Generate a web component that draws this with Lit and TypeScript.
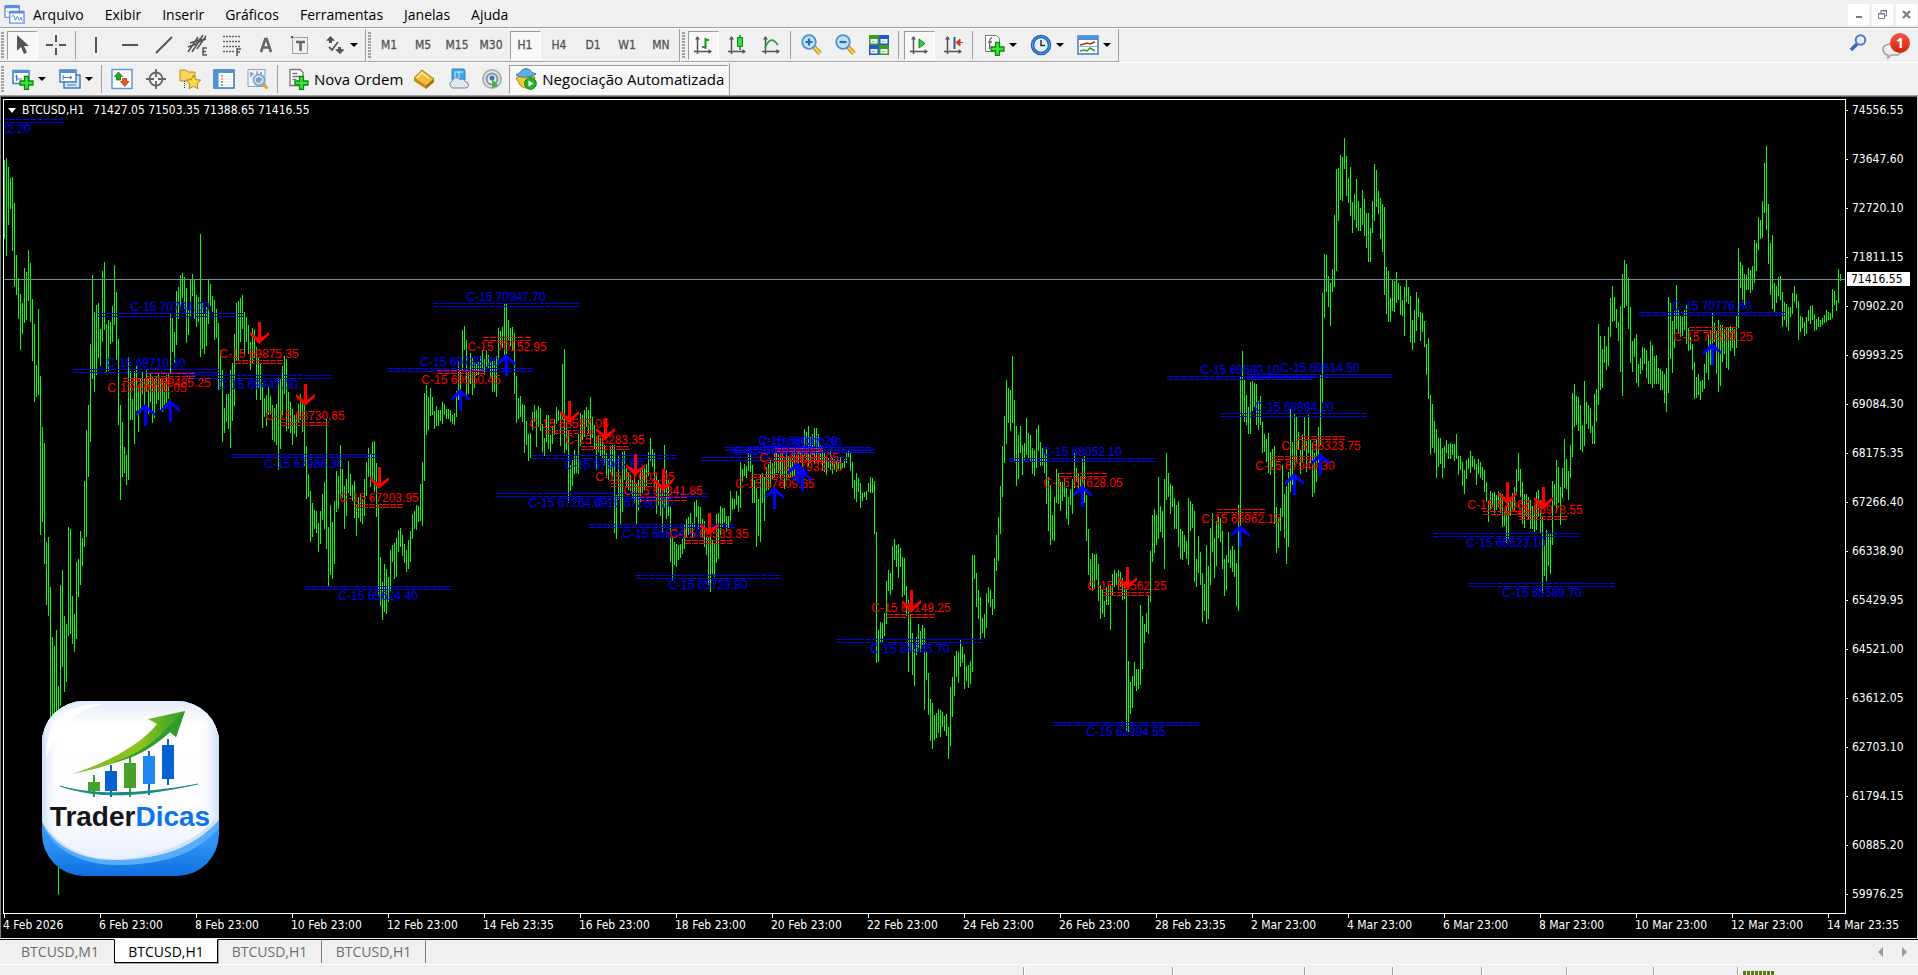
import { LitElement, html, svg, css, nothing } from "lit";
import type { SVGTemplateResult } from "lit";
import { customElement, property, state } from "lit/decorators.js";
import { classMap } from "lit/directives/class-map.js";

const UI_FONT = css`"Open Sans", "Noto Sans", sans-serif`;
const CHART_FONT = css`"DejaVu Sans Condensed", "DejaVu Sans", sans-serif`;

/* High/low of every bar in chart units, oldest first, two units apart. */
const FIRST_BAR_X = 4;
const BAR_STEP = 2;
const BARS = `
160,239 158,256 167,225 178,209 177,251 203,287 255,295 278,319 294,350 303,334 268,323 272,320 250,301 263,322 299,361 324,402
365,397 309,395 376,535 427,522 443,564 542,605 537,616 587,725 637,720 646,740 630,715 686,895 585,706 570,667 616,692 624,682
527,636 529,634 596,644 614,652 562,639 559,597 531,585 538,566 481,547 430,537 405,477 344,442 275,379 312,392 305,375 303,358
329,366 271,342 262,330 324,372 320,371 322,344 306,342 265,325 292,360 339,425 405,500 422,477 447,473 455,485 357,480 371,420
399,420 371,444 366,411 387,432 379,413 372,394 379,406 370,392 379,414 372,402 377,423 379,418 376,404 374,400 379,410 380,412
383,405 375,403 373,399 314,374 318,352 332,363 291,345 287,319 275,306 273,298 277,309 288,343 310,335 280,316 274,296 280,319
295,327 297,322 234,357 303,349 314,354 307,346 279,324 284,306 296,312 300,340 309,338 323,390 350,389 370,442 408,433 394,422
394,429 370,448 363,421 334,406 303,360 301,361 298,342 295,329 312,354 317,342 325,354 342,370 328,363 330,358 347,400 358,389
363,400 383,428 398,417 395,426 387,415 396,414 405,440 408,442 404,445 379,470 379,449 366,415 356,394 359,431 392,429 402,433
409,445 415,434 414,437 404,423 394,420 400,432 401,466 446,499 474,497 491,542 503,537 510,529 511,533 523,552 511,544 494,520
482,529 419,549 527,586 505,575 522,579 501,564 471,512 476,509 445,497 469,498 486,529 479,516 461,493 474,496 485,501 481,518
504,536 497,518 493,522 499,524 479,516 462,496 448,477 454,487 442,481 441,492 463,517 504,596 557,606 582,620 564,612 569,614
577,602 550,591 545,562 543,579 538,577 530,552 528,547 535,556 544,563 550,572 540,569 531,562 514,539 511,529 505,530 506,522
484,521 462,526 393,481 385,435 397,430 388,416 397,415 411,429 406,426 410,426 410,421 402,424 404,415 409,419 409,419 410,422
415,424 413,425 391,417 361,400 370,390 330,372 326,350 340,398 370,394 353,384 358,395 362,388 364,375 361,375 356,370 351,370
359,375 351,367 355,369 362,378 361,392 360,392 356,397 328,365 331,345 327,348 304,355 304,354 320,341 328,346 327,350 333,394
376,423 398,419 396,417 404,422 405,453 421,445 434,461 433,458 412,430 405,422 410,447 406,427 408,431 424,452 438,456 415,442
415,449 435,452 426,444 420,435 407,424 410,421 413,446 364,420 349,453 421,450 430,503 465,491 460,486 450,474 455,473 434,474
413,446 415,440 410,437 407,427 410,434 397,444 417,438 425,449 436,470 435,452 438,456 438,458 445,465 453,476 459,480 447,472
445,476 445,533 495,539 456,500 479,524 452,512 451,480 468,487 472,490 475,491 480,498 460,503 483,524 480,510 470,502 467,493
468,490 464,487 452,476 438,461 449,467 453,487 473,514 480,505 487,516 490,533 445,508 470,519 480,516 507,562 538,580 542,565
544,567 545,560 544,558 539,554 524,549 519,537 517,535 513,533 523,537 502,527 500,517 506,530 507,527 519,537 521,547 537,555
537,585 535,592 540,574 543,577 514,563 513,559 506,535 508,527 508,523 516,532 516,528 491,521 498,510 499,509 491,505 496,512
462,508 469,482 464,476 466,478 453,471 455,472 465,503 480,503 488,547 499,536 474,542 473,503 477,521 467,491 464,490 460,487
463,480 453,477 447,473 450,473 455,480 452,476 460,489 453,480 456,477 458,478 455,477 449,476 455,470 451,468 450,462 448,468
429,456 432,460 426,466 437,462 434,455 428,464 428,460 434,463 445,462 450,470 452,472 458,475 457,468 451,470 458,474 459,470
460,472 462,469 457,470 463,468 459,468 453,463 451,457 452,471 462,488 480,499 473,502 478,492 483,508 493,501 492,497 491,500
483,492 477,493 478,493 481,534 532,663 630,662 622,642 623,642 613,636 581,624 570,591 573,595 546,590 539,560 545,567 544,578
548,567 557,597 558,595 586,616 600,672 615,650 633,675 649,686 637,655 624,651 631,652 625,645 628,710 652,680 673,715 699,741
703,749 715,740 713,738 709,733 710,737 712,727 716,731 714,736 727,759 687,746 677,717 656,696 651,677 652,683 639,667 647,663
654,689 666,681 665,688 661,684 555,672 555,579 573,607 590,619 597,639 618,633 614,638 593,628 587,603 590,607 599,615 558,609
535,571 517,561 486,534 446,497 416,463 380,444 388,423 390,431 356,423 400,461 426,486 435,479 426,453 445,475 443,460 418,455
433,458 435,461 448,474 450,476 429,468 425,451 442,466 448,465 453,473 449,504 477,531 486,545 515,540 497,541 469,503 473,504
482,511 482,501 478,497 488,519 497,525 489,505 479,514 453,488 468,482 473,492 477,490 459,483 456,503 495,541 529,575 559,586
553,591 554,589 554,580 564,601 585,619 590,614 601,617 587,605 585,605 586,630 574,596 570,587 573,585 570,590 572,587 578,600
587,599 590,731 661,732 682,714 676,708 662,686 669,691 669,689 605,685 616,669 624,643 613,632 596,634 551,602 515,562 509,553
515,545 477,539 506,532 511,538 479,569 453,500 473,497 484,514 486,507 498,529 505,529 501,547 529,559 531,560 535,552 541,559
498,565 501,531 504,528 511,582 559,587 536,573 552,585 573,622 584,611 545,624 566,619 528,585 513,552 538,578 521,566 517,538
518,542 531,569 559,596 555,590 532,563 550,568 546,572 550,577 563,606 505,611 377,527 351,415 379,422 395,425 407,434 382,434
381,411 383,407 384,425 401,430 396,425 422,453 434,452 439,462 433,473 452,475 449,467 446,524 507,553 518,548 508,531 465,517
494,538 486,564 472,547 409,492 442,485 413,467 417,463 432,450 450,474 435,463 417,451 441,472 415,453 440,463 443,497 453,493
440,482 427,463 375,445 293,403 254,318 255,292 276,307 283,326 269,292 215,287 169,271 168,221 155,200 157,201 138,169 156,196
178,203 167,216 202,233 194,220 179,228 201,231 208,231 190,225 199,236 213,248 213,262 228,262 201,233 164,221 170,207 191,214
198,239 204,252 207,295 267,314 271,322 298,322 279,311 281,312 272,303 283,300 286,315 300,316 287,336 280,302 287,304 296,342
320,350 310,343 292,331 298,317 312,341 313,332 321,347 344,375 338,399 395,455 404,448 421,453 429,478 438,467 438,464 448,478
446,468 440,453 444,459 443,459 444,455 444,461 434,459 456,475 456,470 462,486 470,494 460,479 458,469 451,473 456,467 459,470
464,485 459,474 462,478 467,480 470,492 482,502 500,522 491,510 493,507 492,513 495,510 491,507 493,513 494,527 510,526 507,543
503,539 497,516 493,510 487,510 469,493 453,481 469,497 482,524 494,528 494,517 497,520 500,529 506,529 505,532 492,530 490,517
500,533 517,593 540,576 530,581 534,566 534,574 481,545 484,505 460,510 467,503 487,525 468,498 439,488 459,489 471,500 445,478
393,457 384,427 396,425 397,431 405,450 425,452 381,446 402,424 405,429 408,433 426,444 394,444 389,422 324,405 336,390 349,388
336,363 346,370 327,366 298,337 286,322 297,321 309,328 322,341 306,372 274,396 260,308 264,306 278,329 307,363 341,372 338,357
334,383 364,387 358,374 347,370 348,364 350,378 361,384 341,384 345,388 356,384 355,384 368,384 369,390 371,390 374,403 368,412
297,393 303,359 321,373 311,348 285,329 310,334 316,337 317,336 310,330 305,344 328,351 337,350 344,370 362,399 377,398 374,395
381,400 380,392 364,389 350,373 335,380 330,365 313,350 323,342 331,374 320,392 325,386 325,362 329,354 328,368 328,370 326,351
328,348 329,356 316,348 248,328 262,288 265,300 274,305 275,290 268,290 270,293 266,290 240,283 243,271 217,250 220,239 201,238
163,213 146,230 204,264 243,295 235,309 283,312 286,303 277,296 276,300 292,327 302,320 304,327 307,331 307,317 293,314 286,302
294,308 301,340 316,332 317,328 322,336 317,334 310,321 306,324 305,320 314,331 319,330 317,327 320,327 318,325 315,323 310,322
312,320 313,320 289,318 291,305 300,311 269,303 274,281`
  .trim()
  .split(/\s+/)
  .map((bar) => bar.split(",").map(Number));

const BAR_PATH = BARS.map(([high, low], i) => `M${FIRST_BAR_X + i * BAR_STEP + 0.5} ${high}V${low}`).join("");

type Side = "up" | "down";
type Level = [x: number, y: number, price: string, side: Side];

const BLUE_LEVELS: Level[] = [
  [-9, 121, "74322.20", "down"],
  [170, 315, "70764.00", "up"],
  [146, 371, "69710.30", "up"],
  [258, 377, "69447.00", "down"],
  [304, 456, "67986.30", "down"],
  [378, 588, "65624.40", "down"],
  [506, 305, "70947.70", "up"],
  [460, 370, "69738.20", "up"],
  [604, 457, "67962.60", "down"],
  [568, 495, "67264.30", "down"],
  [634, 495, "67260.20", "down"],
  [662, 526, "66634.60", "down"],
  [708, 577, "65729.80", "down"],
  [774, 459, "67961.60", "up"],
  [798, 449, "68027.20", "up"],
  [802, 451, "68202.30", "up"],
  [910, 641, "64545.70", "down"],
  [1082, 460, "68052.10", "up"],
  [1126, 724, "62994.55", "down"],
  [1240, 378, "69580.10", "up"],
  [1320, 376, "69614.50", "up"],
  [1294, 415, "68894.20", "up"],
  [1506, 535, "66523.10", "down"],
  [1542, 585, "65589.70", "down"],
  [1712, 314, "70776.60", "up"],
];

const RED_LEVELS: Level[] = [
  [147, 380, "69392.05", "down"],
  [171, 375, "69485.25", "down"],
  [259, 362, "69875.35", "up"],
  [305, 424, "68730.65", "up"],
  [379, 506, "67203.95", "up"],
  [461, 372, "69550.45", "down"],
  [507, 339, "70152.95", "down"],
  [569, 432, "68587.05", "up"],
  [605, 448, "68283.35", "up"],
  [635, 485, "67602.05", "up"],
  [663, 499, "67341.85", "up"],
  [709, 542, "66533.35", "up"],
  [775, 476, "67609.65", "down"],
  [799, 450, "68091.05", "down"],
  [803, 459, "67933.70", "down"],
  [911, 616, "65149.25", "up"],
  [1083, 475, "67628.05", "down"],
  [1127, 594, "65562.25", "up"],
  [1241, 511, "66962.15", "down"],
  [1295, 458, "67949.30", "down"],
  [1321, 438, "68323.75", "down"],
  [1507, 513, "67067.55", "up"],
  [1543, 518, "66978.55", "up"],
  [1713, 329, "70339.25", "down"],
];

const SELL_ARROWS = [
  [259, 322], [305, 384], [379, 467], [569, 401], [605, 418], [635, 454], [663, 469],
  [709, 513], [911, 590], [1127, 567], [1507, 482], [1543, 487],
];
const BUY_ARROWS = [
  [145, 404], [170, 400], [460, 389], [506, 354], [774, 487], [797, 462], [802, 469],
  [1082, 485], [1240, 525], [1294, 473], [1320, 453], [1712, 343],
];

const PRICES = [
  "74556.55", "73647.60", "72720.10", "71811.15", "70902.20", "69993.25", "69084.30", "68175.35", "67266.40",
  "66338.90", "65429.95", "64521.00", "63612.05", "62703.10", "61794.15", "60885.20", "59976.25",
];

const DATES = [
  "4 Feb 2026", "6 Feb 23:00", "8 Feb 23:00", "10 Feb 23:00", "12 Feb 23:00", "14 Feb 23:35", "16 Feb 23:00",
  "18 Feb 23:00", "20 Feb 23:00", "22 Feb 23:00", "24 Feb 23:00", "26 Feb 23:00", "28 Feb 23:35", "2 Mar 23:00",
  "4 Mar 23:00", "6 Mar 23:00", "8 Mar 23:00", "10 Mar 23:00", "12 Mar 23:00", "14 Mar 23:35",
];

const AXES = svg`<path d="M5.500 3v17M2 17.500h17" stroke="#555" stroke-width="1.500" fill="none"/>
  <path d="M3 5.500L5.500 2L8 5.500zM16.500 15L20 17.500L16.500 20z" fill="#555"/>`;
const SMALL_PLUS = svg`<path d="M12.500 8.500h4v4.500H21v4h-4.500v4.500h-4V17H8v-4h4.500z" fill="#3fe03f" stroke="#0a8a0a" stroke-width="1.300"/>`;
const LENS = (sign: string) => svg`<path d="M14 13l6 6.500" stroke="#b8860b" stroke-width="4.500"/>
  <path d="M14 13l6 6.500" stroke="#f6d34a" stroke-width="2.500"/>
  <circle cx="9" cy="8" r="6.800" fill="#bfe3fb" stroke="#4d94cf" stroke-width="1.800"/>
  <path d="${sign}" stroke="#2b6ca8" stroke-width="2.200"/>`;

const ICONS: Record<string, SVGTemplateResult> = {
  cursor: svg`<path d="M6 1v16l4-4 3 7 3-1.500-3-6.500h5z" fill="#555"/>`,
  cross: svg`<path d="M11 1v7M11 14v7M1 11h7M14 11h7" stroke="#555" stroke-width="2"/><path d="M10.500 10.500h1v1h-1z" fill="#555"/>`,
  vline: svg`<path d="M11 3v16" stroke="#555" stroke-width="2"/>`,
  hline: svg`<path d="M3 11h16" stroke="#555" stroke-width="2"/>`,
  trend: svg`<path d="M3 19L19 3" stroke="#555" stroke-width="2"/>`,
  channel: svg`<path d="M1 18L11 3M5 18L16 1M10 15L19 2M1 13l8-3M3 9l9-3M9 9l10-4M12 5l5 1" stroke="#555" stroke-width="1.500" fill="none"/>
    <path d="M20 14h-4v7h4M16 17.500h3" stroke="#555" stroke-width="1.500" fill="none"/>`,
  fibo: svg`<path d="M2 2.500h18M2 7.500h18M2 12.500h18M2 17.500h11" stroke="#666" stroke-width="1.500" stroke-dasharray="2 1" fill="none"/>
    <path d="M20 15h-4v7M16 18h3" stroke="#555" stroke-width="1.500" fill="none"/>`,
  textA: svg`<path d="M6 18L10.300 5h1.400L16 18M7.500 13.500h7" stroke="#666" stroke-width="2.600" fill="none"/>`,
  textT: svg`<path d="M3.500 3.500h15v16h-15z" stroke="#555" stroke-dasharray="1 1" fill="none"/>
    <path d="M7 8h9M11.500 8v9" stroke="#666" stroke-width="2.500"/><path d="M2 2h2v2H2z" fill="#555"/>`,
  shapes: svg`<path d="M2 6.500L6.500 2 11 6.500 8 7v2H5V7zM11 15.500l3-.500v-2h3v2l3.500.500L16 20z" fill="#555"/>
    <path d="M5 13l3 3 6-8" stroke="#555" stroke-width="1.800" fill="none"/>`,
  bars: svg`${AXES}<path d="M13.500 4v11M13.500 6H17M10 13h3.500" stroke="#1a9a1a" stroke-width="2"/>`,
  candles: svg`${AXES}<path d="M14 1v15" stroke="#118811" stroke-width="1.500"/><path d="M11.500 3.500h5v9h-5z" fill="#2fdc4a" stroke="#118811"/>`,
  line: svg`${AXES}<path d="M5 14C9 4 13 4 18 11" stroke="#3c9a4c" stroke-width="1.800" fill="none"/>`,
  zoomIn: LENS("M5.500 8h7M9 4.500v7"),
  zoomOut: LENS("M5.500 8h7"),
  tile: svg`<path d="M1 1h10v10H1z" fill="#3f9a1e"/><path d="M11 1h10v10H11z" fill="#2458c8"/>
    <path d="M1 11h10v10H1z" fill="#2458c8"/><path d="M11 11h10v10H11z" fill="#3f9a1e"/>
    <path d="M2.500 5h7v4.500h-7zM12.500 5h7v4.500h-7zM2.500 15h7v4.500h-7zM12.500 15h7v4.500h-7z" fill="#e4f1fb"/>
    <path d="M4 7.500h3M14 7.500h3M4 17.500h3M14 17.500h3" stroke="#8fb3d8"/>`,
  autoScroll: svg`${AXES}<path d="M11 5l6 4.500-6 4.500z" fill="#2fd24a" stroke="#118811"/>`,
  shift: svg`${AXES}<path d="M12.500 3v12" stroke="#27618f" stroke-width="2"/><path d="M21 8.500h-4M14 8.500l4-3.500v7z" stroke="#c43c12" fill="#c43c12"/>`,
  indicators: svg`<path d="M2.500 1.500h11l3 3v13h-14z" fill="#fff" stroke="#777"/><path d="M9 4c-3 0-2 3-2.500 11M5 8h4" stroke="#666" stroke-width="1.300" fill="none"/>${SMALL_PLUS}`,
  clock: svg`<circle cx="11" cy="11" r="8.500" fill="#e6f1fb" stroke="#1c62b8" stroke-width="3.600"/><circle cx="11" cy="11" r="8.500" fill="none" stroke="#5aa6ee" stroke-width="1"/>
    <path d="M11 6v5.500h4" stroke="#333" stroke-width="1.500" fill="none"/>`,
  template: svg`<path d="M1 2h20v18H1z" fill="#fff" stroke="#3f7fc0" stroke-width="1.500"/><path d="M1 2h20v4H1z" fill="#4c93d6"/>
    <path d="M3 11l4-1 3-1 3 1 5-2" stroke="#a8351c" stroke-width="1.500" fill="none"/>
    <path d="M2 12.500h18" stroke="#8ab4dc"/><path d="M3 17l4-1 3 1 3-3 5 3" stroke="#2f9a3a" stroke-width="1.500" fill="none"/>`,
  newChart: svg`<path d="M1 2.500h16v13H1z" fill="#fff" stroke="#3f7fc0" stroke-width="1.500"/><path d="M1 2h16v3H1z" fill="#4c93d6"/>
    <path d="M4.500 7v6M3 9h3M4 11h6" stroke="#5577aa"/>${SMALL_PLUS}`,
  profiles: svg`<path d="M5 7h16v13H5z" fill="#d7e8f8" stroke="#3f7fc0" stroke-width="1.500"/>
    <path d="M1 2h16v12H1z" fill="#fff" stroke="#3f7fc0" stroke-width="1.500"/><path d="M1 2h16v3H1z" fill="#4c93d6"/>
    <path d="M4 7v5M4 9.500h9M11 8l2 1.500-2 1.500M8 17h9" stroke="#5577aa" fill="none"/>`,
  market: svg`<path d="M1 1.500h20v19H1z" fill="#fff" stroke="#5b9bd8" stroke-width="1.500"/><path d="M12 5h6M12 8h6M12 11h6" stroke="#dde3ea"/>
    <path d="M3.500 8.500L7.500 4l4 4.500H9.500V12h-4V8.500z" fill="#22a822" stroke="#117711" stroke-width=".8"/>
    <path d="M9.500 13.500h2V10.500h4v3h2.500l-4.300 5z" fill="#ee5a22" stroke="#b83c0a" stroke-width=".8"/>`,
  navigator: svg`<circle cx="11" cy="11" r="6.500" fill="none" stroke="#666" stroke-width="1.800"/><path d="M11 1v8M11 13v8M1 11h8M13 11h8" stroke="#666" stroke-width="1.800"/>`,
  favorites: svg`<path d="M1 2h6l2 2h7v9H1z" fill="#f7d45c" stroke="#b98f1c"/><path d="M5.500 13v8" stroke="#333" stroke-dasharray="1 1"/>
    <path d="M14.500 7l2.200 4.600 5 .600-3.600 3.500.900 5-4.500-2.400L10 20.700l.900-5-3.600-3.500 5-.600z" fill="#fbdc4e" stroke="#b08312"/>`,
  book: svg`<path d="M1 2h20v18H1z" fill="#fff" stroke="#2f78c4" stroke-width="1.500"/><path d="M1 2h20v3H1zM1 2h4.500v18H1z" fill="#4c93d6"/>
    <path d="M8 8h2M8 11h2" stroke="#d33"/><path d="M8 14h2M8 17h2" stroke="#333"/><path d="M11 8h8M11 11h8M11 14h8M11 17h8" stroke="#d5e2f0"/>`,
  tester: svg`<path d="M1 1.500h17v17H1z" fill="#eef3f8" stroke="#8aa4bd"/><path d="M4 4v5M4 6h3M10 3v5M14 4v3" stroke="#667"/>
    <path d="M16 16l4.500 4.500" stroke="#e0a820" stroke-width="3"/><circle cx="12" cy="12" r="5.500" fill="#c5e3f8" stroke="#6ba3d0" stroke-width="1.500"/><path d="M10 14v-4M12 15V9M14 13v-3" stroke="#557"/>`,
  order: svg`<path d="M3 1.500h10l3 3v13H3z" fill="#fff" stroke="#777" stroke-width="1.300"/><path d="M5.500 5.500h5M5.500 8.500h7M5.500 11.500h4" stroke="#777" stroke-width="1.300"/>${SMALL_PLUS}`,
  gold: svg`<path d="M1 10L9 2l12 9-8 7z" fill="#f2bd3a" stroke="#a8740c"/><path d="M1 10l12 8v3L1 13z" fill="#c98a14"/><path d="M13 18l8-7v3l-8 7z" fill="#a8690a"/><path d="M4 10l5-5 7 5.500" stroke="#fbe7a0" stroke-width="1.500" fill="none"/>`,
  cloud: svg`<path d="M5 1h12l1 2v9H5z" fill="#3fa4ee" stroke="#2f86c8"/><path d="M8 4v7M8 4h8M12 4v6" stroke="#d8effc"/>
    <path d="M5 20a4 4 0 0 1 0-7 4.500 4.500 0 0 1 8-1.500 4 4 0 0 1 5.500 2.500 3 3 0 0 1 0 6z" fill="#dfe6ee" stroke="#6f86a2"/>`,
  signal: svg`<circle cx="11" cy="11" r="9" fill="#e8ece8" stroke="#a9b4ae" stroke-width="2"/><circle cx="11" cy="11" r="5.500" fill="none" stroke="#7d93ae" stroke-width="2"/>
    <circle cx="11" cy="10" r="2.500" fill="#3a77b8"/><path d="M11 11v9a9 9 0 0 0 6-3z" fill="#4fb04a"/>`,
  expert: svg`<path d="M1 10q7-5 19-1l-2 8q-7 6-13 0z" fill="#f3c53c" stroke="#b5860f"/><path d="M1 7q8 5 20-1-5-1-6-4-4-3-8 0-1 3-6 5z" fill="#5db0e0" stroke="#2f7fb0"/>
    <circle cx="15.500" cy="15.500" r="5.800" fill="#1fb32a" stroke="#0f7d18"/><path d="M13.500 12.500l5 3-5 3z" fill="#fff"/>`,
};

/** A glyph from the icon set, drawn on a 22-unit grid. */
const icon = (name: string) => html`<svg class="icon" viewBox="0 0 22 22" aria-hidden="true">${ICONS[name]}</svg>`;

@customElement("tool-button")
class ToolButton extends LitElement {
  static styles = css`
    :host {
      display: flex;
      align-items: center;
      justify-content: center;
      width: 34px;
    }
    :host([wide]) {
      width: auto;
    }
    :host([menu]) {
      width: 47px;
    }
    button {
      all: unset;
      box-sizing: border-box;
      display: flex;
      align-items: center;
      justify-content: center;
      gap: 5px;
      width: 31px;
      height: 29px;
      border: 1px solid transparent;
      color: #000;
      font: 15px/20px ${UI_FONT};
      white-space: nowrap;
    }
    .wide {
      width: auto;
      padding: 0 3px 0 5px;
    }
    .menu {
      width: 45px;
      gap: 4px;
    }
    .code {
      color: #555;
      font: 12px/20px ${CHART_FONT};
      -webkit-text-stroke: 0.3px #555;
    }
    .pressed {
      border-color: #9c9c9c #fff #fff #9c9c9c;
      background: #f8f8f8;
    }
    .icon {
      flex: none;
      width: 22px;
      height: 22px;
    }
    .caret {
      border: 4px solid transparent;
      border-top-color: #000;
      border-bottom: 0;
    }
  `;
  @property() icon = "";
  @property() label = "";
  @property() code = "";
  @property({ type: Boolean, reflect: true }) wide = false;
  @property({ type: Boolean, reflect: true }) menu = false;
  @property({ type: Boolean }) pressed = false;

  render() {
    const classes = { wide: this.wide, menu: this.menu, pressed: this.pressed, code: !!this.code };
    return html`<button class=${classMap(classes)} type="button" aria-label=${this.label || this.code} aria-pressed=${this.pressed}>
      ${this.icon ? icon(this.icon) : nothing}${this.code}${this.wide ? this.label : nothing}
      ${this.menu ? html`<span class="caret"></span>` : nothing}
    </button>`;
  }
}

@customElement("price-chart")
class PriceChart extends LitElement {
  static styles = css`
    :host {
      display: grid;
      grid-template: minmax(0, 1fr) 24px / minmax(0, 1fr) 70px;
      padding: 2px 1px 0 2px;
      background: #000;
      color: #fff;
      font: 12px/14px ${CHART_FONT};
      overflow: hidden;
    }
    .plot {
      position: relative;
      border: 1px solid #fff;
      overflow: hidden;
    }
    .canvas {
      display: block;
      width: 100%;
      height: 100%;
    }
    .bars {
      fill: none;
      stroke: #0f0;
      shape-rendering: crispEdges;
    }
    .last {
      stroke: #778899;
    }
    .level {
      font: 12px "Liberation Sans", Arial, sans-serif;
      text-anchor: middle;
    }
    .rule {
      fill: none;
      stroke-dasharray: 6 1;
      shape-rendering: crispEdges;
    }
    .blue {
      fill: #00f;
    }
    .blue .rule {
      stroke: #00f;
    }
    .red {
      fill: #f00;
    }
    .red .rule {
      stroke: #f00;
    }
    .title {
      position: absolute;
      top: 3px;
      left: 4px;
      display: flex;
      align-items: center;
      gap: 6px;
    }
    .marker {
      border: 4px solid transparent;
      border-top: 5px solid #fff;
      border-bottom: 0;
    }
    .symbol {
      margin-right: 3px;
    }
    .brand {
      position: absolute;
      bottom: 37px;
      left: 38px;
      width: 177px;
      height: 175px;
    }
    .brand-name {
      font: 700 28px "Liberation Sans", Arial, sans-serif;
      text-anchor: middle;
    }
    .prices {
      position: relative;
      display: flex;
      flex-direction: column;
      gap: 35px;
      padding-top: 4px;
    }
    .price {
      display: flex;
      align-items: center;
      gap: 4px;
    }
    .price::before {
      width: 2px;
      height: 1px;
      background: #fff;
      content: "";
    }
    .current {
      position: absolute;
      top: 173px;
      left: 1px;
      width: 59px;
      padding-left: 4px;
      background: #fff;
      color: #000;
    }
    .dates {
      display: flex;
      grid-column: 1 / -1;
    }
    .date {
      flex: none;
      width: 96px;
      white-space: nowrap;
    }
    .date::before {
      display: block;
      width: 1px;
      height: 4px;
      margin-left: 1px;
      background: #fff;
      content: "";
    }
  `;

  private level([x, y, price, side]: Level, tone: string, width: number) {
    const textY = side === "up" ? y - 4 : y + 12;
    const left = x - Math.floor(width / 2);
    return svg`<g class="level ${tone}">
      <path class="rule" d="M${left} ${y - 1.5}h${width}M${left} ${y + 1.5}h${width}"/>
      <text x=${x} y=${textY}>C-15 ${price}</text>
    </g>`;
  }

  private arrow(x: number, y: number, side: Side) {
    const flip = side === "up" ? "" : "translate(0 22) scale(1 -1)";
    return svg`<g transform="translate(${x} ${y})"><path class=${side === "up" ? "blue" : "red"} transform=${flip}
      d="M0 0L10 9V12L2 6V22H-1V6L-9 12V9L0 0z"/></g>`;
  }

  private brand() {
    return html`<svg class="brand" viewBox="0 0 177 175" role="img" aria-label="TraderDicas">
      <defs>
        <linearGradient id="face" x2="0" y2="1"><stop offset="0" stop-color="#e4ecfb" /><stop offset=".15" stop-color="#fff" /><stop offset=".7" stop-color="#fdfdff" /><stop offset="1" stop-color="#e9f0fc" /></linearGradient>
        <linearGradient id="edge" x2="1" y2="0"><stop offset="0" stop-color="#cfddf6" /><stop offset=".1" stop-color="#fff" stop-opacity="0" /><stop offset=".88" stop-color="#fff" stop-opacity="0" /><stop offset="1" stop-color="#cfddf6" /></linearGradient>
        <linearGradient id="base" x2="0" y2="1"><stop offset=".8" stop-color="#2f96f7" /><stop offset="1" stop-color="#0f6fe0" /></linearGradient>
        <linearGradient id="rise" x1="0" x2="1"><stop offset="0" stop-color="#7dbb22" /><stop offset=".6" stop-color="#8cc320" /><stop offset="1" stop-color="#2f9c28" /></linearGradient>
        <clipPath id="tile"><rect width="177" height="175" rx="42" /></clipPath>
      </defs>
      <g clip-path="url(#tile)">
        <rect width="177" height="175" fill="url(#base)" />
        <path d="M0 0H177V127C150 158 110 164 75 164C35 164 8 145 0 122z" fill="#58adfa" />
        <path d="M0 0H177V119C150 150 110 159 72 159C32 159 8 140 0 120z" fill="#cfe2f8" />
        <path d="M0 0H177V114C150 146 105 158 68 158C34 157 10 138 0 118z" fill="url(#face)" />
        <path d="M0 0H177V114C150 146 105 158 68 158C34 157 10 138 0 118z" fill="url(#edge)" />
        <path d="M4 60C4 20 20 4 60 3C30 10 10 30 4 60z" fill="#fff" />
      </g>
      <path d="M30 73C70 60 100 42 115 23L106 18L143 10L134 36L128 31C105 52 75 64 30 73z" fill="url(#rise)" />
      <path d="M70 62C100 52 118 36 127 25L143 10L134 36L128 31C110 48 90 58 70 62z" fill="#2f9c28" />
      <g stroke-width="2">
        <path d="M52 74v22M88 56v40" stroke="#3a9a2a" />
        <path d="M69 64v32M107 50v44M126 38v46" stroke="#0a63cf" />
        <path d="M46 81h12v9H46zM82 62h12v25H82z" fill="#46a02a" />
        <path d="M63 70h12v20H63zM120 44h12v34H120z" fill="#0560d0" />
        <path d="M101 55h12v28H101z" fill="#1f86f2" />
      </g>
      <path d="M18 85C60 99 100 95 156 83C100 92 60 95 18 85z" fill="#178a86" />
      <path d="M18 85C60 99 100 95 156 83" stroke="#178a86" fill="none" />
      <text class="brand-name" x="88" y="125"><tspan fill="#151515">Trader</tspan><tspan fill="#0a74ea">Dicas</tspan></text>
    </svg>`;
  }

  render() {
    return html`
      <div class="plot">
        <svg class="canvas" role="img" aria-label="BTCUSD,H1">
          <g transform="translate(-4 -100)">
            <path class="bars" d=${BAR_PATH} />
            <line class="last" x1="0" x2="4000" y1="279.5" y2="279.5" />
            ${BLUE_LEVELS.map((level) => this.level(level, "blue", 146))}
            ${RED_LEVELS.map((level) => this.level(level, "red", 48))}
            ${SELL_ARROWS.map(([x, y]) => this.arrow(x, y, "down"))}
            ${BUY_ARROWS.map(([x, y]) => this.arrow(x, y, "up"))}
          </g>
        </svg>
        <div class="title">
          <span class="marker"></span><span class="symbol">BTCUSD,H1</span><span>71427.05 71503.35 71388.65 71416.55</span>
        </div>
        ${this.brand()}
      </div>
      <div class="prices">
        ${PRICES.map((price) => html`<span class="price">${price}</span>`)}
        <span class="current">71416.55</span>
      </div>
      <div class="dates">${DATES.map((date) => html`<span class="date">${date}</span>`)}</div>
    `;
  }
}

@customElement("app-root")
class AppRoot extends LitElement {
  static styles = css`
    :host {
      display: flex;
      flex-direction: column;
      height: 100vh;
      overflow: hidden;
      background: #f0f0f0;
      color: #000;
      font: 14px/20px ${UI_FONT};
    }
    button {
      all: unset;
      white-space: nowrap;
    }
    .menu-bar {
      display: flex;
      align-items: center;
      gap: 21px;
      box-sizing: border-box;
      height: 28px;
      padding: 2px 1px 0 4px;
      border-bottom: 1px solid #a0a0a0;
    }
    .app-icon {
      width: 21px;
      height: 21px;
      margin-right: -13px;
    }
    .window-buttons {
      display: flex;
      gap: 3px;
      margin-left: auto;
    }
    .window-button {
      display: flex;
      align-items: center;
      justify-content: center;
      width: 21px;
      height: 21px;
      background: #fff;
    }
    .window-icon {
      width: 9px;
      height: 9px;
      fill: none;
      stroke: #6f7f8c;
    }
    .bar {
      display: flex;
      box-sizing: border-box;
      height: 34px;
      border-top: 1px solid #fff;
    }
    .bar.second {
      border-bottom: 1px solid #a0a0a0;
    }
    .group {
      display: flex;
      border-right: 1px solid #a0a0a0;
      border-bottom: 1px solid #a0a0a0;
      padding-right: 1px;
      margin-right: 1px;
    }
    .second .group {
      border-bottom: 0;
    }
    .grip {
      width: 3px;
      margin: 3px 1px 3px 1px;
      background: repeating-linear-gradient(#a0a0a0 0 2px, #f0f0f0 2px 3px);
    }
    .divider {
      width: 1px;
      margin: 2px 3px 2px 2px;
      background: #a0a0a0;
    }
    .side {
      display: flex;
      align-items: center;
      gap: 15px;
      margin-left: auto;
      padding-right: 8px;
    }
    .search-icon {
      width: 18px;
      height: 18px;
    }
    .inbox {
      position: relative;
      width: 28px;
      height: 26px;
    }
    .badge {
      position: absolute;
      top: 0;
      right: 0;
      width: 20px;
      height: 20px;
      border-radius: 50%;
      background: linear-gradient(#ee5a40, #d6200c);
      color: #fff;
      font: 700 14px/20px ${UI_FONT};
      text-align: center;
    }
    price-chart {
      flex: 1;
      min-height: 0;
      border-top: 1px solid #606060;
      border-left: 1px solid #808080;
      border-right: 1px solid #d8d8d8;
    }
    .tabs {
      display: flex;
      box-sizing: border-box;
      height: 26px;
      margin-top: 1px;
      border-top: 1px solid #000;
      border-bottom: 1px solid #fff;
      padding-left: 6px;
    }
    .tab {
      box-sizing: border-box;
      width: 104px;
      height: 23px;
      border-right: 1px solid #808080;
      color: #6d6d6d;
      line-height: 23px;
      text-align: center;
    }
    .tab.first {
      width: 108px;
      border-right: 0;
    }
    .tab.active {
      margin-top: -1px;
      height: 24px;
      border: 1px solid #000;
      border-top-color: #fff;
      background: #fff;
      color: #000;
      box-shadow: 1px 1px #a0a0a0;
    }
    .scrollers {
      display: flex;
      align-items: center;
      gap: 19px;
      margin-left: auto;
      padding-right: 11px;
    }
    .scroller {
      border: 5px solid transparent;
      border-right-color: #999;
      border-left: 0;
    }
    .scroller.next {
      border-right: 0;
      border-left: 5px solid #999;
    }
    .status {
      display: flex;
      box-sizing: border-box;
      justify-content: flex-end;
      height: 10px;
      padding-top: 2px;
      overflow: hidden;
    }
    .cell {
      box-sizing: border-box;
      border-left: 1px solid #a0a0a0;
      box-shadow: inset 1px 0 #fff;
    }
    .traffic {
      width: 32px;
      height: 9px;
      margin: 4px 0 0 5px;
      background: repeating-linear-gradient(90deg, #5a7a10 0 3px, #f0f0f0 3px 4px);
    }
  `;

  @state() private activeTab = 1;
  @state() private timeframe = "H1";

  private cells = [149, 132, 88, 89, 85, 87, 84];

  render() {
    return html`
      <nav class="menu-bar">
        <svg class="app-icon" viewBox="0 0 22 22" aria-hidden="true">
          <path d="M1 2h15v12H1z" fill="#fff" stroke="#6a9ade" stroke-width="1.500" /><path d="M1 1h15v3.500H1z" fill="#5c8fe0" />
          <path d="M3 7l2 2 3-1 3 1" stroke="#6a9ade" fill="none" />
          <path d="M6 8h15v12H6z" fill="#fff" stroke="#6a9ade" stroke-width="1.500" /><path d="M6 7h15v3H6z" fill="#5c8fe0" />
          <path d="M8 13l2-1 2 5 2-4 2 4 2-3 1 4" stroke="#4f83d6" fill="none" />
        </svg>
        ${["Arquivo", "Exibir", "Inserir", "Gráficos", "Ferramentas", "Janelas", "Ajuda"].map(
          (name) => html`<button type="button">${name}</button>`,
        )}
        <span class="window-buttons">
          <button class="window-button" type="button" aria-label="Minimizar">
            <svg class="window-icon" viewBox="0 0 9 9"><path d="M2 7h6" stroke-width="2" /></svg>
          </button>
          <button class="window-button" type="button" aria-label="Restaurar">
            <svg class="window-icon" viewBox="0 0 9 9"><path d="M.5 3.500h6v5h-6zM3 3V.5h5.500V6H7" /><path d="M0 4h7M2.500 1H9" /></svg>
          </button>
          <button class="window-button" type="button" aria-label="Fechar">
            <svg class="window-icon" viewBox="0 0 9 9"><path d="M1 1l7 7M8 1L1 8" stroke-width="2.200" /></svg>
          </button>
        </span>
      </nav>

      <div class="bar">
        <div class="group">
          <span class="grip"></span>
          <tool-button icon="cursor" label="Cursor" pressed></tool-button>
          <tool-button icon="cross" label="Cruz"></tool-button>
          <span class="divider"></span>
          <tool-button icon="vline" label="Linha vertical"></tool-button>
          <tool-button icon="hline" label="Linha horizontal"></tool-button>
          <tool-button icon="trend" label="Linha de tendência"></tool-button>
          <tool-button icon="channel" label="Canal"></tool-button>
          <tool-button icon="fibo" label="Fibonacci"></tool-button>
          <tool-button icon="textA" label="Texto"></tool-button>
          <tool-button icon="textT" label="Rótulo"></tool-button>
          <tool-button icon="shapes" label="Setas" menu></tool-button>
        </div>
        <div class="group">
          <span class="grip"></span>
          ${["M1", "M5", "M15", "M30", "H1", "H4", "D1", "W1", "MN"].map(
            (code) => html`<tool-button
              code=${code}
              ?pressed=${code === this.timeframe}
              @click=${() => (this.timeframe = code)}
            ></tool-button>`,
          )}
        </div>
        <div class="group">
          <span class="grip"></span>
          <tool-button icon="bars" label="Barras" pressed></tool-button>
          <tool-button icon="candles" label="Velas"></tool-button>
          <tool-button icon="line" label="Linha"></tool-button>
          <span class="divider"></span>
          <tool-button icon="zoomIn" label="Ampliar"></tool-button>
          <tool-button icon="zoomOut" label="Reduzir"></tool-button>
          <tool-button icon="tile" label="Lado a lado"></tool-button>
          <span class="divider"></span>
          <tool-button icon="autoScroll" label="Rolagem automática" pressed></tool-button>
          <tool-button icon="shift" label="Deslocar gráfico"></tool-button>
          <span class="divider"></span>
          <tool-button icon="indicators" label="Indicadores" menu></tool-button>
          <tool-button icon="clock" label="Períodos" menu></tool-button>
          <tool-button icon="template" label="Modelos" menu></tool-button>
        </div>
        <div class="side">
          <button type="button" aria-label="Buscar">
            <svg class="search-icon" viewBox="0 0 18 18">
              <path d="M8 10l-6 6" stroke="#3a68c0" stroke-width="3.500" /><circle cx="11.500" cy="6" r="4.800" fill="#e9f0fc" stroke="#4a7ad0" stroke-width="2" />
            </svg>
          </button>
          <button class="inbox" type="button" aria-label="Mensagens">
            <svg viewBox="0 0 28 26">
              <path d="M3 21q-6-8 5-10h8q8 5 0 11H9l-3 3v-3z" fill="#ececf0" stroke="#a0a0a8" stroke-width="1.500" />
            </svg>
            <span class="badge">1</span>
          </button>
        </div>
      </div>

      <div class="bar second">
        <div class="group">
          <span class="grip"></span>
          <tool-button icon="newChart" label="Novo gráfico" menu></tool-button>
          <tool-button icon="profiles" label="Perfis" menu></tool-button>
          <span class="divider"></span>
          <tool-button icon="market" label="Observação do mercado"></tool-button>
          <tool-button icon="navigator" label="Janela de dados"></tool-button>
          <tool-button icon="favorites" label="Navegador"></tool-button>
          <tool-button icon="book" label="Terminal"></tool-button>
          <tool-button icon="tester" label="Testador"></tool-button>
          <span class="divider"></span>
          <tool-button icon="order" label="Nova Ordem" wide></tool-button>
          <tool-button icon="gold" label="MetaEditor"></tool-button>
          <tool-button icon="cloud" label="Nuvem"></tool-button>
          <tool-button icon="signal" label="Sinais"></tool-button>
          <tool-button icon="expert" label="Negociação Automatizada" wide pressed></tool-button>
        </div>
      </div>

      <price-chart></price-chart>

      <div class="tabs">
        ${["BTCUSD,M1", "BTCUSD,H1", "BTCUSD,H1", "BTCUSD,H1"].map(
          (name, i) => html`<button
            class=${classMap({ tab: true, first: i === 0, active: i === this.activeTab })}
            type="button"
            @click=${() => (this.activeTab = i)}
          >${name}</button>`,
        )}
        <span class="scrollers">
          <button class="scroller" type="button" aria-label="Anterior"></button>
          <button class="scroller next" type="button" aria-label="Próximo"></button>
        </span>
      </div>
      <div class="status">
        ${this.cells.map((width) => html`<span class="cell" style="width:${width}px"></span>`)}
        <span class="cell" style="width:181px"><div class="traffic"></div></span>
      </div>
    `;
  }
}
